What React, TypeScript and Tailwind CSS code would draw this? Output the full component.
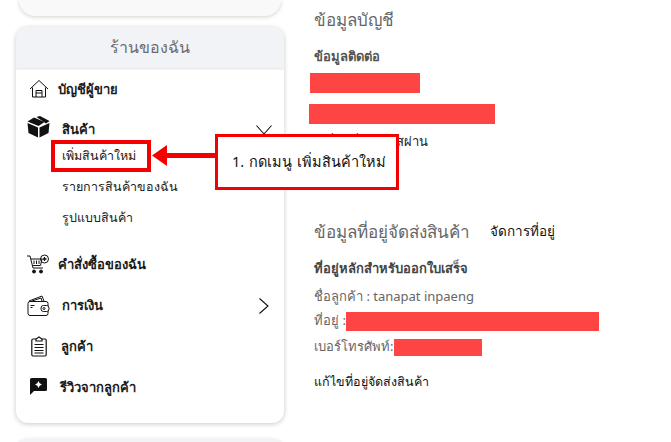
import React from 'react';

const HomeIcon = () => (
  <svg width="20" height="20" viewBox="0 0 20 20" fill="none" stroke="#111" strokeWidth="1">
    <path d="M1 10 10 1.500 19 10" />
    <path d="M3.500 8.500V18h13V8.500" />
    <path d="M7 18v-6.500h6V18M7 14h6" />
  </svg>
);

const BoxIcon = () => (
  <svg width="23" height="22" viewBox="0 0 23 22" fill="#111">
    <path d="M0.500 7 11 11.500V21.500L1.500 17Z" />
    <path d="M22.500 7 12.500 11.500V21.500L21.500 17Z" />
    <path d="M0.500 5.500 7 1.500 17.500 6 11.500 10Z" />
    <path d="M9.500 1 13 0 22.500 5 19 7.500Z" />
  </svg>
);

const CartIcon = () => (
  <svg width="24" height="21" viewBox="0 0 24 21" fill="none" stroke="#111" strokeWidth="1">
    <path d="M1 2h3l3 12h10" />
    <path d="M5 5h11l-1.500 6.500H6.500" />
    <path d="M8 6.500v3.500M10.500 6.500v3.500M13 6.500v3.500" />
    <circle cx="8" cy="17.500" r="1.500" fill="#111" />
    <circle cx="15" cy="17.500" r="1.500" fill="#111" />
    <circle cx="18.500" cy="5" r="4" />
    <path d="M18.500 3v4M16.500 5h4" strokeWidth="1.300" />
  </svg>
);

const WalletIcon = () => (
  <svg width="23" height="22" viewBox="0 0 23 22" fill="none" stroke="#111" strokeWidth="1">
    <path d="M2 6 15 1l2 5" />
    <path d="M5 6l9-3 1 3" />
    <rect x="1" y="6.500" width="20" height="14" rx="2" />
    <rect x="14" y="10.500" width="8" height="6" rx="2.500" fill="#fff" />
    <circle cx="17" cy="13.500" r="1" />
    <path d="M3.500 10.500h4M3.500 12.500h2" />
  </svg>
);

const ClipboardIcon = () => (
  <svg width="16" height="21" viewBox="0 0 16 21" fill="none" stroke="#111" strokeWidth="1.200">
    <path d="M5 3H2a1.200 1.200 0 0 0-1.200 1.200v14.600A1.200 1.200 0 0 0 2 20h12a1.200 1.200 0 0 0 1.200-1.200V4.200A1.200 1.200 0 0 0 14 3h-3" />
    <path d="M5 5V3l3-2 3 2v2Z" />
    <path d="M3.500 8.500h9M3.500 11.500h9M3.500 14.500h9M3.500 17h9" />
  </svg>
);

const ReviewIcon = () => (
  <svg width="17" height="17" viewBox="0 0 17 17">
    <path d="M1.500 0h14A1.500 1.500 0 0 1 17 1.500v10a1.500 1.500 0 0 1-1.500 1.500H4L0 17V1.500A1.500 1.500 0 0 1 1.500 0Z" fill="#111" />
    <path d="M8.500 3 9.700 5.300 12 6.500 9.700 7.700 8.500 10 7.300 7.700 5 6.500 7.300 5.300Z" fill="#fff" />
  </svg>
);

const DownChevron = () => (
  <svg className="ml-auto mr-[12px]" width="16" height="10" viewBox="0 0 16 10" fill="none" stroke="#111" strokeWidth="1.100">
    <path d="M0.500 0.500 8 9 15.500 0.500" />
  </svg>
);

const RightChevron = () => (
  <svg className="ml-auto mr-[15px]" width="10" height="16" viewBox="0 0 10 16" fill="none" stroke="#111" strokeWidth="1.100">
    <path d="M0.500 0.500 9 8 0.500 15.500" />
  </svg>
);

export default function App() {
  return (
    <div className="relative h-[442px] w-[671px] overflow-hidden bg-white font-['Noto_Sans','Noto_Sans_CJK_SC',sans-serif]">
      <div className="flex h-full">
        {/* Left sidebar */}
        <div className="ml-4 w-[268px] shrink-0">
          <div className="mx-[3px] h-4 rounded-b-[20px] bg-[#f9f9fa] shadow-[0_1px_4px_rgba(0,0,0,0.18)]" />

          <div className="mt-[11px] h-[396px] overflow-hidden rounded-xl bg-white shadow-[0_1px_5px_rgba(0,0,0,0.22)]">
            <div className="flex h-[41px] items-center justify-center bg-[#f2f3f6] pb-[2px] text-[16px] text-[#6b6b70] shadow-[0_1px_2px_rgba(0,0,0,0.12)]">
              ร้านของฉัน
            </div>

            <div className="flex h-[41px] items-center pl-[13px] pt-[2px] text-[13px] font-bold text-[#1b1b1b]">
              <span className="w-[29px] pb-[2px]"><HomeIcon /></span>
              <span>บัญชีผู้ขาย</span>
            </div>

            <div className="flex h-[32px] items-center pl-[11px] pt-[10px] text-[13px] font-bold text-[#1b1b1b]">
              <span className="mb-[6px] w-[35px]"><BoxIcon /></span>
              <span>สินค้า</span>
              <DownChevron />
            </div>

            <div className="flex flex-col pl-[46px] text-[12.500px] text-[#222]">
              <span className="flex h-[31px] items-center">เพิ่มสินค้าใหม่</span>
              <span className="flex h-[31px] items-center">รายการสินค้าของฉัน</span>
              <span className="flex h-[31px] items-center">รูปแบบสินค้า</span>
            </div>

            <div className="mt-[10px] flex h-[41px] items-center pl-[10px] text-[13px] font-bold text-[#1b1b1b]">
              <span className="w-[32px]"><CartIcon /></span>
              <span>คำสั่งซื้อของฉัน</span>
            </div>

            <div className="flex h-[41px] items-center pl-[11px] text-[13px] font-bold text-[#1b1b1b]">
              <span className="w-[35px]"><WalletIcon /></span>
              <span>การเงิน</span>
              <RightChevron />
            </div>

            <div className="flex h-[41px] items-center pl-[15px] text-[13px] font-bold text-[#1b1b1b]">
              <span className="w-[30px]"><ClipboardIcon /></span>
              <span>ลูกค้า</span>
            </div>

            <div className="flex h-[41px] items-center pl-[14px] text-[13px] font-bold text-[#1b1b1b]">
              <span className="w-[30px] pb-[2px]"><ReviewIcon /></span>
              <span>รีวิวจากลูกค้า</span>
            </div>
          </div>

          <div className="mt-4 h-6 rounded-t-xl bg-[#f2f3f6] shadow-[0_1px_4px_rgba(0,0,0,0.18)]" />
        </div>

        {/* Right column */}
        <div className="ml-[30px] flex-1 pt-[8px]">
          <h2 className="text-[17px] leading-[23px] text-[#666]">ข้อมูลบัญชี</h2>
          <p className="mt-[15px] text-[13px] font-bold leading-[20px] text-[#555]">ข้อมูลติดต่อ</p>
          <div className="-ml-1 mt-[7px] h-5 w-[110px] bg-[#ff4444]" />
          <div className="-ml-[5px] mt-[11px] h-5 w-[186px] bg-[#ff4444]" />
          <p className="mt-[7px] text-[13px] leading-5 text-[#222]">เปลี่ยนชื่อ / รหัสผ่าน</p>

          <div className="mt-[69px] flex h-[23px] items-center">
            <h2 className="text-[17px] leading-[23px] text-[#666]">ข้อมูลที่อยู่จัดส่งสินค้า</h2>
            <a className="ml-[20px] text-[13.500px] text-[#111]">จัดการที่อยู่</a>
          </div>
          <p className="mt-[15px] text-[13px] font-bold leading-5 text-[#444]">ที่อยู่หลักสำหรับออกใบเสร็จ</p>
          <p className="mt-2 text-[13px] leading-5 text-[#666]">ชื่อลูกค้า : tanapat inpaeng</p>
          <div className="mt-[5px] flex h-5 items-center text-[13px] text-[#666]">
            <span>ที่อยู่ :</span>
            <span className="h-[19px] w-[253px] bg-[#ff4444]" />
          </div>
          <div className="mt-[6px] flex h-5 items-center text-[13px] text-[#666]">
            <span>เบอร์โทรศัพท์:</span>
            <span className="ml-[1px] h-[17px] w-[88px] bg-[#ff4444]" />
          </div>
          <p className="mt-[15px] text-[12.500px] leading-5 text-[#111]">แก้ไขที่อยู่จัดส่งสินค้า</p>
        </div>
      </div>

      {/* Annotation over the page */}
      <div className="absolute left-[51px] top-[140px] h-[32px] w-[100px] border-4 border-[#f50000]" />
      <svg className="absolute left-[151px] top-[144px]" width="66" height="24" viewBox="0 0 66 24" fill="#f50000">
        <path d="M1 11.500 16 1V9H66V14H16V22Z" />
      </svg>
      <div className="absolute left-[215px] top-[134px] flex h-[56px] w-[184px] items-center border-[3px] border-[#f50000] bg-white pl-[14px] text-[14.500px] text-[#111] [word-spacing:1px]">
        1. กดเมนู เพิ่มสินค้าใหม่
      </div>
    </div>
  );
}
